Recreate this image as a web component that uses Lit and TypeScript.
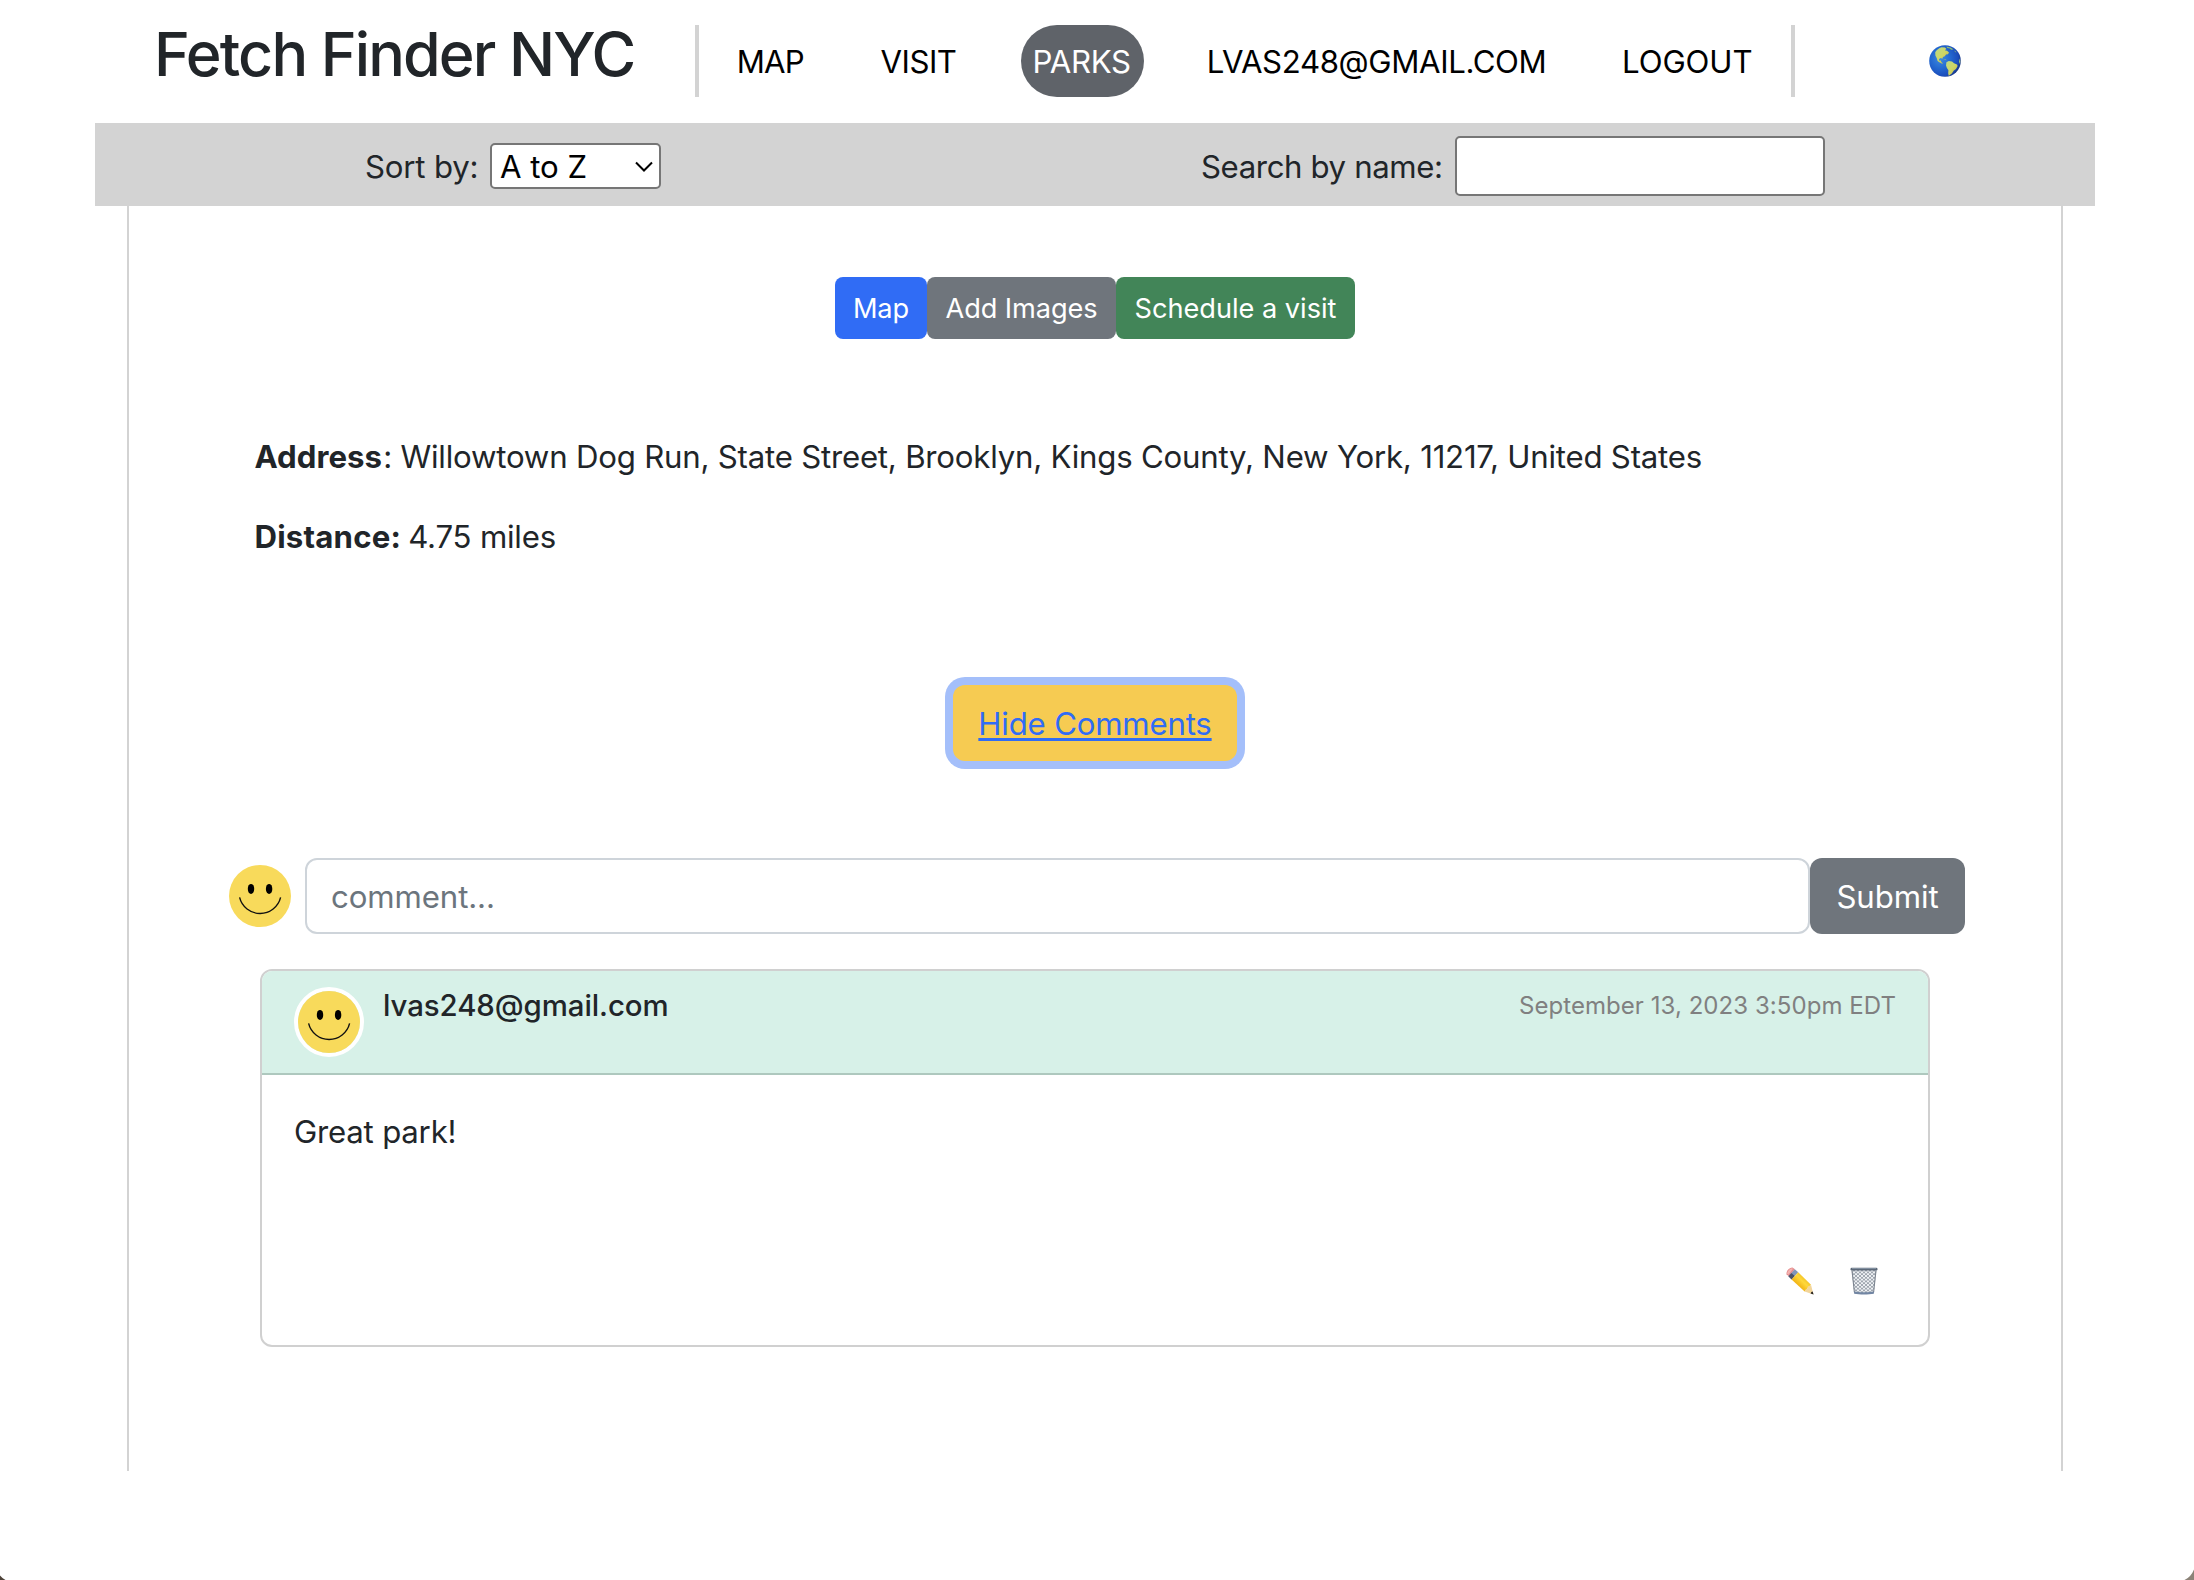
import { LitElement, html, css, svg } from "lit";
import { customElement, property } from "lit/decorators.js";

@customElement("smiley-face")
class SmileyFace extends LitElement {
  static styles = css`
    :host { display: block; width: 62px; height: 62px; flex: none; border-radius: 50%; }
    svg { display: block; }
  `;
  render() {
    return html`<svg width="62" height="62" viewBox="0 0 62 62">
      <circle cx="31" cy="31" r="31" fill="#f8da5b" />
      <ellipse cx="22" cy="23.9" rx="3.2" ry="5" />
      <ellipse cx="40.1" cy="23.9" rx="3.2" ry="5" />
      <path d="M10.6 32.4A21.1 21.1 0 0 0 51.6 32.4" fill="none" stroke="#111" stroke-width="1.4" />
    </svg>`;
  }
}

const globe = svg`<svg class="globe" width="32" height="32" viewBox="0 0 32 32">
  <defs>
    <radialGradient id="sea" cx=".36" cy=".42" r=".66">
      <stop offset="0" stop-color="#3d8be0" /><stop offset=".5" stop-color="#2367cf" />
      <stop offset=".85" stop-color="#1b4dbb" /><stop offset="1" stop-color="#18357f" />
    </radialGradient>
    <linearGradient id="land" x1="0" y1="0" x2="1" y2="1">
      <stop offset="0" stop-color="#b9d98a" /><stop offset=".5" stop-color="#cfd765" /><stop offset="1" stop-color="#c9b23c" />
    </linearGradient>
  </defs>
  <circle cx="16" cy="16" r="15.8" fill="url(#sea)" />
  <path fill="url(#land)" d="M6.2 7.2C7.6 4.8 10 3 12.5 2.2L16 2.4l1.4 1.5-1.6 1.3 2.2.6 2 1.8-1 1.6-2 .4-1.2 1.7-1.8.8-.6 1.6-1.6-.6-1.8.8.2 1.8 1.8-.2.2 1.6 1.6 1.2-.6.5-2.4-1.2-2.2-1.6-.8-2.8L6.4 10.6z" />
  <path fill="#8fbd74" d="M17.5 1.6l4 .8 3 2-2.4.4-1.4-1.2-2.6-.6zM25.4 5.2l2.2 2.4-1.6-.6z" />
  <path fill="url(#land)" d="M17.4 17.2l2.4-1.2 3.2.4 2 1.8 3 1.2.6 1.6-1.6 3-2.2 1.4-2 3-2 1.6-1 1-.6-2.4.2-3.4-1.6-2.4-.8-2.4z" />
  <path fill="#9fc07a" d="M14.2 14l2.6.4 1 .8-1.6-.2zM30.6 13.6l.8 2.6-.6 2.8-.8-2.2z" />
</svg>`;

const pencil = svg`<svg width="28" height="28" viewBox="0 0 28 28">
  <defs>
    <linearGradient id="wood" x1="0" y1="1" x2="1" y2="0">
      <stop offset="0" stop-color="#c98300" /><stop offset=".3" stop-color="#f0b010" />
      <stop offset=".55" stop-color="#ffd83a" /><stop offset="1" stop-color="#d99a08" />
    </linearGradient>
  </defs>
  <path d="M.6 7.2C-.2 4.6 3 .4 6.4 .6l2.6 1.6-6.4 7z" fill="#e58b8c" />
  <path d="M1 6.6C1.6 4 3.6 1.6 6 1.2l1 .6-4.6 6z" fill="#f4b3b0" />
  <path d="M2.4 9.2L8.8 2.2l3.4 3-6.6 7.2z" fill="#8195b8" />
  <path d="M2.4 9.2l3-3.3 3.3 3-3.1 3.5z" fill="#4d5367" />
  <path d="M5.6 12.4l6.6-7.2L25 17.8 18.6 24.6z" fill="url(#wood)" />
  <path d="M18.6 24.6c.6-2 1.4-2.6 2.6-2.6 0-1.8.8-3 2.8-3.2l1-1 2.4 9.6z" fill="#f2d59b" />
  <path d="M24.6 26.6c.2-1 .9-2 2-2.2l1 3.2z" fill="#26221f" />
</svg>`;

const bin = svg`<svg width="28" height="28" viewBox="0 0 28 28">
  <defs>
    <pattern id="mesh" width="4" height="3.6" patternUnits="userSpaceOnUse">
      <rect width="4" height="3.6" fill="#eef1f4" />
      <path d="M0 0l4 3.6M4 0L0 3.6" stroke="#8a929c" stroke-width=".75" />
    </pattern>
  </defs>
  <path d="M1.6 3h24.8l-2.6 23.4H4.2z" fill="url(#mesh)" />
  <path d="M2 3.4l2.4 21.8M26 3.4l-2.4 21.8" stroke="#7d8590" stroke-width="1.1" />
  <path d="M3.9 24.4c5 1 15.2 1 20.2 0l-.3 2.4c-5 1-14.600 1-19.600 0z" fill="#7286a3" />
  <rect x=".5" y=".8" width="27" height="2.7" rx="1.2" fill="#5c6878" />
  <rect x="2" y="1.2" width="24" height=".8" fill="#8d9aab" />
</svg>`;

@customElement("park-comment")
class ParkComment extends LitElement {
  @property() author = "";
  @property() date = "";
  @property() text = "";
  static styles = css`
    :host {
      display: flex; flex-direction: column; box-sizing: border-box; width: 1670px; height: 378px;
      border: 2px solid #d0d0d0; border-radius: 12px; overflow: hidden; background: #fff;
    }
    .head { display: flex; box-sizing: border-box; height: 104px; padding: 9px 32px 0; background: #d7f1e8; border-bottom: 2px solid #aec8be; }
    .face { margin-top: 7px; border: 4px solid #fff; }
    .author { margin-left: 19px; line-height: 51px; font-size: 29.4px; font-weight: 500; letter-spacing: -.07px; }
    .date { margin-left: auto; line-height: 52px; font-size: 24px; letter-spacing: .059px; color: #808080; }
    .body { flex: 1; display: flex; flex-direction: column; padding: 33px 50px 0 32px; }
    .text { line-height: 48px; letter-spacing: -.22px; }
    .actions { display: flex; justify-content: flex-end; gap: 36px; margin-top: 111px; }
    svg { display: block; }
  `;
  render() {
    return html`
      <div class="head">
        <smiley-face class="face"></smiley-face>
        <span class="author">${this.author}</span>
        <span class="date">${this.date}</span>
      </div>
      <div class="body">
        <span class="text">${this.text}</span>
        <div class="actions">${pencil}${bin}</div>
      </div>`;
  }
}

@customElement("app-root")
class AppRoot extends LitElement {
  static styles = css`
    :host {
      display: block; position: relative; box-sizing: border-box; width: 2194px; height: 1580px; overflow: hidden;
      background: #fff; color: #212529; font: 400 31.2px Inter, "Liberation Sans", sans-serif; white-space: nowrap;
    }
    * { box-sizing: border-box; }
    .top { display: flex; align-items: flex-start; height: 123px; padding-left: 154px; }
    h1 { width: 541px; margin: 24px 0 0; font-size: 61px; line-height: 60px; font-weight: 500; letter-spacing: -1.879px; }
    nav {
      display: grid; grid-template-columns: 143.8px 140.5px 123px 62.8px 415.2px 1fr; align-items: center;
      width: 1100px; height: 72px; margin-top: 25px; padding-left: 37.7px;
      border: solid #d3d3d3; border-width: 0 4px; color: #000; line-height: 72px;
    }
    nav span { padding-top: 1px; height: 72px; }
    .map { letter-spacing: -.845px; }
    .visit { letter-spacing: -.5px; }
    .parks { background: #5f6369; color: #fff; border-radius: 36px; padding-left: 11.5px; letter-spacing: -.339px; }
    .mail { grid-column: 5; letter-spacing: -.37px; }
    .logout { letter-spacing: -.084px; }
    .globe { margin: 45px 0 0 134px; }
    .bar { display: flex; align-items: center; width: 2000px; height: 83px; margin-left: 95px; padding: 3px 0 0 270px; background: #d3d3d3; }
    .bar label { padding-top: 2px; }
    .sort { width: 125px; letter-spacing: -.2px; }
    .pick { position: relative; width: 170.5px; height: 46px; }
    select {
      display: block; appearance: none; width: 100%; height: 46px; margin: 0; padding: 1px 0 0 8px; border: 2px solid #767676;
      border-radius: 5px; background: #fff; color: #000; font: inherit; letter-spacing: -.05px;
    }
    .pick svg { position: absolute; right: 8px; top: 17.5px; }
    .search { width: 254px; margin-left: 540.5px; letter-spacing: -.392px; }
    .bar input { width: 369.5px; height: 60px; padding: 0 8px; border: 2px solid #767676; border-radius: 5px; background: #fff; font: inherit; }
    main { width: 1936px; height: 1265px; margin-left: 127px; padding-top: 71px; border: solid #d3d3d3; border-width: 0 2px; }
    .links { display: flex; justify-content: center; }
    button { display: block; margin: 0; padding: 0; border: 0; color: #fff; font: inherit; text-align: center; }
    .links button { height: 62px; border-radius: 8px; font-size: 27.2px; letter-spacing: -.1px; }
    .blue { width: 92px; background: #306cf5; }
    .grey { width: 189px; background: #6f757c; }
    .links .green { width: 239px; background: #428558; letter-spacing: -.03px; }
    .facts { margin: 94px 0 0 125.5px; display: flex; flex-direction: column; gap: 32px; line-height: 48px; }
    .facts p { display: flex; margin: 0; white-space: pre; }
    .address strong { margin-right: 1.2px; letter-spacing: .02px; }
    .address span { letter-spacing: -.218px; }
    .distance strong { margin-right: 7px; letter-spacing: .2px; }
    .distance span { letter-spacing: -.2px; }
    .toggle {
      width: 284px; height: 76px; margin: 124px auto 0; padding-top: 2px; border-radius: 12px; background: #f6cb52; box-shadow: 0 0 0 8px #a4bffa;
      color: #306cf5; letter-spacing: -.2px; text-decoration: underline; text-decoration-thickness: 3px; text-underline-offset: 3px;
    }
    .form { display: flex; align-items: center; height: 76px; margin: 97px 0 35px 100px; }
    .form input {
      width: 1505px; height: 76px; margin-left: 14px; padding: 1px 24px 0; border: 2px solid #ced4da; border-radius: 12px;
      background: #fff; font: inherit; letter-spacing: -.104px;
    }
    .form input::placeholder { color: #6c757d; opacity: 1; }
    .form button { width: 155px; height: 76px; padding-top: 1px; border-radius: 12px; background: #6f757c; letter-spacing: -.084px; }
    park-comment { margin-left: 131px; }
    .corner { position: absolute; bottom: 0; }
    .left { left: 0; }
    .right { right: 0; }
  `;
  render() {
    return html`
      <header class="top">
        <h1>Fetch Finder NYC</h1>
        <nav>
          <span class="map">MAP</span>
          <span class="visit">VISIT</span>
          <span class="parks">PARKS</span>
          <span class="mail">LVAS248@GMAIL.COM</span>
          <span class="logout">LOGOUT</span>
        </nav>
        ${globe}
      </header>
      <div class="bar">
        <label class="sort">Sort by:</label>
        <div class="pick">
          <select><option>A to Z</option></select>
          <svg width="18" height="12" viewBox="0 0 18 12"><path d="M1 1.5l8 8 8-8" fill="none" stroke="#000" stroke-width="2" /></svg>
        </div>
        <label class="search">Search by name:</label>
        <input type="text" />
      </div>
      <main>
        <div class="links">
          <button class="blue">Map</button>
          <button class="grey">Add Images</button>
          <button class="green">Schedule a visit</button>
        </div>
        <div class="facts">
          <p class="address"><strong>Address</strong><span>: Willowtown Dog Run, State Street, Brooklyn, Kings County, New York, 11217, United States</span></p>
          <p class="distance"><strong>Distance:</strong><span>4.75 miles</span></p>
        </div>
        <button class="toggle">Hide Comments</button>
        <div class="form">
          <smiley-face></smiley-face>
          <input type="text" placeholder="comment..." />
          <button>Submit</button>
        </div>
        <park-comment author="lvas248@gmail.com" date="September 13, 2023 3:50pm EDT" text="Great park!"></park-comment>
      </main>
      <svg class="corner left" width="6" height="5" viewBox="0 0 6 5"><path d="M0 .5Q2 3 5.5 5H0z" fill="#4d4238" /></svg>
      <svg class="corner right" width="10" height="11" viewBox="0 0 10 11"><path d="M10 .5Q7 8 .5 11H10z" fill="#8b8378" /></svg>
    `;
  }
}
